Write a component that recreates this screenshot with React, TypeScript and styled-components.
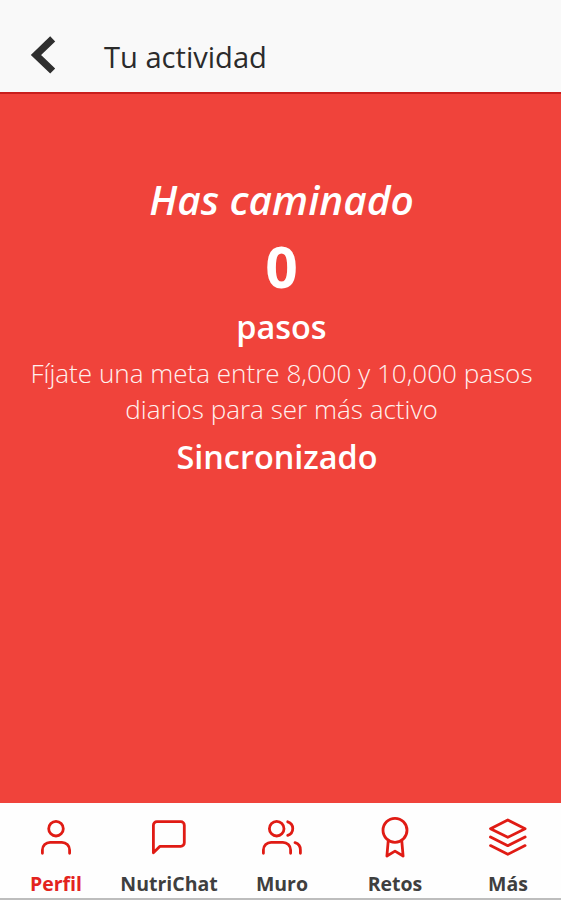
import React from "react";
import styled, { createGlobalStyle } from "styled-components";

const Global = createGlobalStyle`
  * { box-sizing: border-box; }
  body { margin: 0; font-family: "Open Sans", sans-serif; }
`;
const Screen = styled.div`
  width: 561px; height: 900px; display: flex; flex-direction: column;
  background: #f0433b; overflow: hidden;
`;
const Header = styled.header`
  height: 94px; flex: none; display: flex; align-items: center;
  padding: 17px 0 0 30px; background: #f9f9f9; border-bottom: 2px solid #c81e1c;
`;
const Back = styled.svg`
  width: 26px; height: 40px; flex: none; display: block;
`;
const Title = styled.h1`
  margin: 5px 0 0 48px; font-size: 29.1px; line-height: 40px; font-weight: 400; color: #2b2b2b;
`;
const Main = styled.main`
  flex: 1; display: flex; flex-direction: column; align-items: center; color: #fff;
  text-align: center; white-space: nowrap; padding-left: 2px;
`;
const Line = styled.p<{ $size: number; $weight: number; $lh: number }>`
  margin: 0; font-size: ${p => p.$size}px; font-weight: ${p => p.$weight}; line-height: ${p => p.$lh}px;
`;
const Heading = styled(Line)`
  margin-top: 77px; font-style: italic;
`;
const Hint = styled(Line)`
  margin-top: 7px; color: #fff1ef;
`;
const Status = styled(Line)`
  margin: 7px 9px 0 0;
`;
const Nav = styled.nav`
  height: 97px; flex: none; display: grid; grid-template-columns: repeat(5, 113px);
  background: #fefefe; border-bottom: 2px solid #bdbdbd;
`;
const Tab = styled.div<{ $active?: boolean }>`
  display: flex; flex-direction: column; align-items: center; padding-top: 13px;
  font-size: 19.5px; line-height: 26px; font-weight: 700; white-space: nowrap;
  color: ${p => (p.$active ? "#e3231e" : "#3f3f3f")};
`;
const Label = styled.span`
  margin-right: 1px;
`;
const Icon = styled.svg`
  width: 43px; height: 44px; flex: none; margin-bottom: 11px; overflow: visible;
  fill: none; stroke: #e01b14; stroke-width: 2.8; stroke-linecap: round; stroke-linejoin: round;
`;

const tabs = [
  {
    label: "Perfil",
    icon: <><circle cx="21" cy="12.7" r="7.3" /><path d="M7.4 37.3V34a7.7 7.7 0 0 1 7.7-7.7h11.8a7.7 7.7 0 0 1 7.7 7.7v3.3" /></>,
  },
  {
    label: "NutriChat",
    icon: <path d="M36.3 26.8a3.5 3.5 0 0 1-3.5 3.5H12l-6.6 6.5V9.2a3.5 3.5 0 0 1 3.5-3.5h23.9a3.5 3.5 0 0 1 3.5 3.5z" />,
  },
  {
    label: "Muro",
    icon: <><circle cx="15.7" cy="12.7" r="7.3" /><path d="M2.4 37.3V34a7.7 7.7 0 0 1 7.7-7.7h11.8a7.7 7.7 0 0 1 7.7 7.7v3.3M26.7 5.8a7.1 7.1 0 0 1 0 13.6M34 26.6a7.5 7.5 0 0 1 5.4 7.4v3.3" /></>,
  },
  {
    label: "Retos",
    icon: <><circle cx="21" cy="14.3" r="12" /><path d="M14.2 25.2 12.9 40l8.1-4.9 8.1 4.9-1.3-14.8" /></>,
  },
  {
    label: "Más",
    icon: <path d="M20.8 4 3.5 12.7l17.3 8.6 17.3-8.6zM3.5 21l17.3 8.7L38.1 21M3.5 29.6l17.3 8.7 17.3-8.7" />,
  },
];

export default function App() {
  return (
    <Screen>
      <Global />
      <Header>
        <Back viewBox="0 0 26 40"><path d="M22.7 3.8 6 20l16.7 16" fill="none" stroke="#2f2f2f" strokeWidth="7.2" /></Back>
        <Title>Tu actividad</Title>
      </Header>
      <Main>
        <Heading $size={40.6} $weight={600} $lh={58}>Has caminado</Heading>
        <Line $size={57} $weight={700} $lh={75}>0</Line>
        <Line $size={32.4} $weight={600} $lh={44}>pasos</Line>
        <Hint $size={26.05} $weight={300} $lh={36}>Fíjate una meta entre 8,000 y 10,000 pasos<br />diarios para ser más activo</Hint>
        <Status $size={32.4} $weight={600} $lh={44}>Sincronizado</Status>
      </Main>
      <Nav>
        {tabs.map(({ label, icon }, i) => (
          <Tab key={label} $active={i === 0}><Icon viewBox="0 0 43 44">{icon}</Icon><Label>{label}</Label></Tab>
        ))}
      </Nav>
    </Screen>
  );
}
